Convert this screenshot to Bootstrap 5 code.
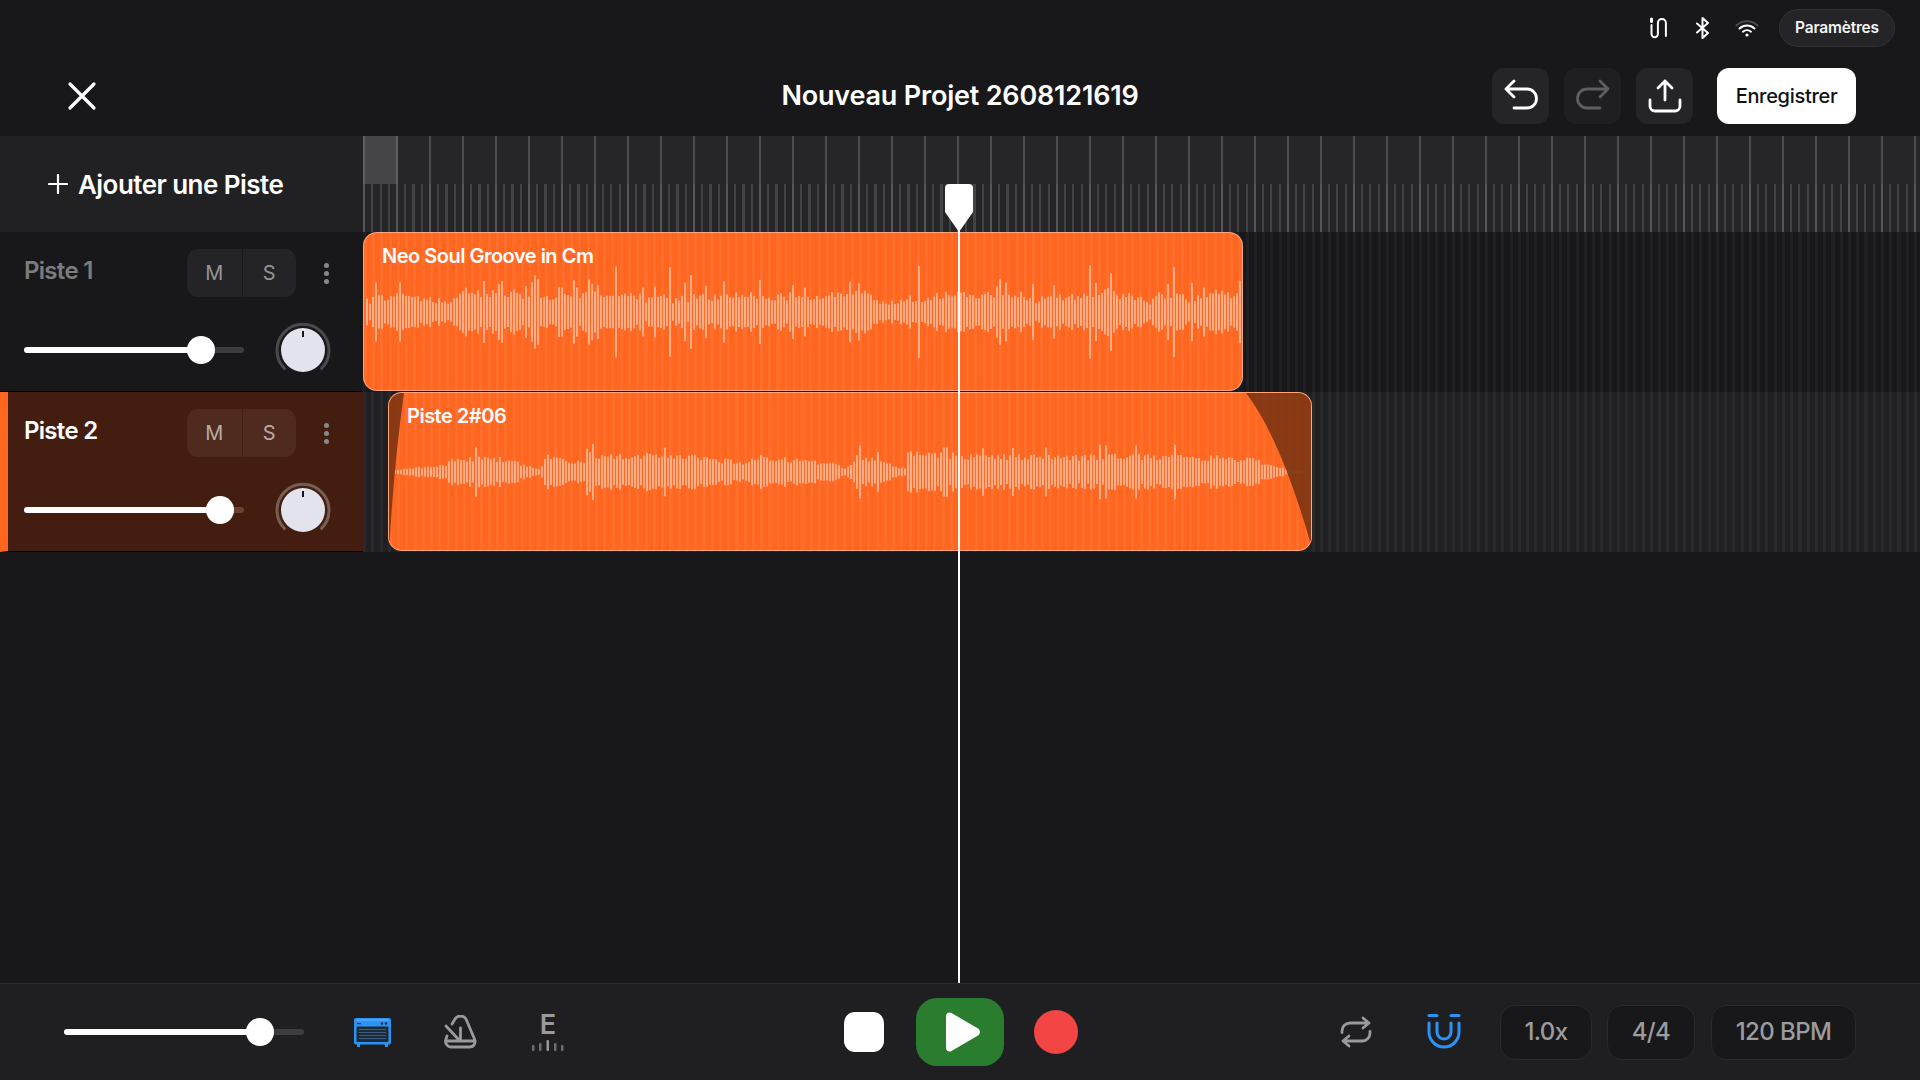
<!DOCTYPE html>
<html lang="fr">
<head>
    <meta charset="UTF-8">
    <meta name="viewport" content="width=device-width, initial-scale=1.0">
    <title>Nouveau Projet 2608121619</title>
    <link rel="stylesheet" href="https://cdn.jsdelivr.net/npm/bootstrap@5.3.0/dist/css/bootstrap.min.css">
    <style>
        html, body { height: 100%; overflow: hidden; }
        body {
            background-color: #18181a;
            color: #fff;
            font-family: Inter, "Liberation Sans", sans-serif;
        }
        .status-row { height: 56px; padding-right: 25px; }
        .status-row svg { display: block; }
        .settings-pill {
            height: 38px;
            width: 116px;
            border: 1.5px solid #333335;
            background: #252527;
            color: #f4f4f4;
            font-size: 15.5px;
            font-weight: 600;
            letter-spacing: -.2px;
            padding: 0;
        }
        .tool-row {
            height: 80px;
            display: grid;
            grid-template-columns: 1fr auto 1fr;
            align-items: center;
            padding: 0 64px;
        }
        .close-btn { margin-left: 2px; background: none; border: 0; padding: 0; line-height: 0; }
        .project-title { font-size: 27px; font-weight: 600; letter-spacing: -.2px; margin: 1px 0 0; }
        .square-btn {
            width: 57px;
            height: 56px;
            border: 0;
            border-radius: 12px;
            background: #252527;
            padding: 0;
        }
        .square-btn.dim { background: #1f1f21; }
        .save-btn {
            width: 139px;
            height: 56px;
            background: #fff;
            color: #111;
            border: 0;
            border-radius: 12px;
            font-size: 20px;
            font-weight: 500;
            letter-spacing: -.3px;
            margin-left: 24px;
        }
        .timeline { position: relative; flex: 1 1 auto; min-height: 0; }
        .left-col { width: 363px; flex: 0 0 363px; }
        .head-row { height: 96px; }
        .add-track {
            background: #212123;
            font-size: 26px;
            font-weight: 600;
            letter-spacing: -.55px;
            padding-left: 48px;
            gap: 10px;
        }
        .ruler { flex: 1 1 auto; background: #262628; position: relative; }
        .ruler-top {
            height: 48px;
            background-image: repeating-linear-gradient(90deg, #4d4d4f 0, #4d4d4f 2px, transparent 2px, transparent 33px);
        }
        .ruler-bottom {
            height: 48px;
            background-image:
                repeating-linear-gradient(90deg, #555557 0, #555557 2px, transparent 2px, transparent 33px),
                repeating-linear-gradient(90deg, #434345 0, #434345 2px, transparent 2px, transparent 8.25px);
        }
        .ruler-cell { position: absolute; left: 0; top: 0; width: 35px; height: 48px; background: #454547; border-left: 2px solid #5f5f61; border-right: 2px solid #5f5f61; }
        .track-row { height: 160px; }
        .track-head { padding: 20px 0 0 24px; position: relative; border-bottom: 1px solid #000; }
        .track-head.active { background: #431e10; border-left: 8px solid #ff6720; padding-left: 16px; }
        .track-name { font-size: 24px; font-weight: 600; letter-spacing: -.7px; color: #7c7c7e; line-height: 30px; width: 163px; margin-bottom: 7px; }
        .active .track-name { color: #fff; }
        .ms-group { width: 109px; height: 48px; margin-top: -3px; background: #242426; border-radius: 11px; overflow: hidden; }
        .ms-btn { flex: 1 1 50%; color: #949496; font-size: 20px; border: 0; background: none; padding: 0; font-weight: 400; }
        .ms-btn + .ms-btn { border-left: 1px solid #18181a; }
        .active .ms-group { background: #4f2a1e; }
        .active .ms-btn { color: #b9aaa5; }
        .active .ms-btn + .ms-btn { border-left-color: #431e10; }
        .kebab { margin-left: 21px; margin-bottom: 2px; width: 18px; gap: 3px; }
        .kebab span { width: 5px; height: 5px; border-radius: 50%; background: #88888a; display: block; }
        .slider-row { margin-top: 25px; height: 56px; }
        .track-range { width: 220px; }
        .knob { margin-left: 29px; display: block; }
        .tone-range {
            --fill: 50%;
            display: block;
            height: 28px;
            padding: 0;
            background: none;
        }
        .tone-range::-webkit-slider-runnable-track {
            height: 6px;
            border-radius: 3px;
            background: linear-gradient(90deg, #fff var(--fill), var(--rest, #3c3c3e) var(--fill));
        }
        .tone-range::-webkit-slider-thumb {
            width: 28px;
            height: 28px;
            margin-top: -11px;
            border: 0;
            border-radius: 50%;
            background: #fff;
            box-shadow: none;
        }
        .active .tone-range { --rest: #6a4336; }
        .lane {
            flex: 1 1 auto;
            position: relative;
            background-color: #18181a;
            background-image: repeating-linear-gradient(90deg, #202022 0, #202022 3px, transparent 3px, transparent 8.25px);
        }
        .lane.lit {
            background-color: #202022;
            background-image: repeating-linear-gradient(90deg, #29292b 0, #29292b 3px, transparent 3px, transparent 8.25px);
        }
        .clip {
            position: absolute;
            top: 0;
            bottom: 1px;
            background-color: #ff6720;
            background-image: repeating-linear-gradient(90deg, #ff6e2a 0, #ff6e2a 3px, transparent 3px, transparent 8.25px);
            border: 1px solid rgba(255,255,255,.4);
            border-radius: 14px;
            overflow: hidden;
        }
        .clip-one { left: 0; width: 880px; }
        .clip-two { left: 25px; width: 924px; }
        .clip-label {
            position: relative;
            z-index: 2;
            font-size: 20px;
            font-weight: 600;
            letter-spacing: -.5px;
            line-height: 24px;
            padding: 11px 0 0 18px;
        }
        .clip svg { position: absolute; left: 0; top: 0; }
        .playhead {
            position: absolute;
            left: 945px;
            top: 48px;
            bottom: 0;
            width: 28px;
            z-index: 5;
            pointer-events: none;
        }
        .playhead-line { position: absolute; left: 13px; top: 46px; bottom: 0; width: 2px; background: #fff; }
        .bottom-bar {
            height: 97px;
            flex: 0 0 97px;
            background: #1f1f21;
            border-top: 1px solid #2c2c2e;
            display: grid;
            grid-template-columns: 1fr auto 1fr;
            align-items: center;
            padding: 0 64px;
        }
        .master-range { width: 240px; }
        .stop-btn { width: 40px; height: 40px; border-radius: 11px; background: #fff; border: 0; padding: 0; margin-left: 2px; }
        .play-btn { width: 88px; height: 68px; border-radius: 21px; background: #2a7d2e; border: 0; padding: 0 0 0 5px; margin-left: 32px; }
        .rec-btn { width: 44px; height: 44px; border-radius: 50%; background: #f44545; border: 0; padding: 0; margin-left: 30px; }
        .tuner-mark { width: 32px; margin-left: 55px; color: #9a9a9c; font-size: 27px; font-weight: 600; line-height: 22px; }
        .value-pill {
            height: 55px;
            background: #18181a;
            border: 1.5px solid #2a2a2c;
            border-radius: 15px;
            color: #9c9c9e;
            font-size: 24px;
            font-weight: 500;
            letter-spacing: -.6px;
            padding: 0;
        }
    </style>
</head>
<body class="d-flex flex-column">

<div class="status-row d-flex justify-content-end align-items-center flex-shrink-0">
    <svg width="20" height="22" viewBox="0 0 20 22" fill="none" stroke="#fff" stroke-width="2" stroke-linecap="round">
        <path d="M2.500 8v9a3.200 3.200 0 0 0 6.400 0V6a4 4 0 0 1 8 0v13"/>
        <path d="M2.500 2v2.500" stroke-width="3"/>
    </svg>
    <svg width="16" height="22" viewBox="0 0 16 22" fill="none" stroke="#fff" stroke-width="2" stroke-linejoin="round" stroke-linecap="round" style="margin-left:26px">
        <path d="M2 6.500l11 9.500-5.500 5V1L13 6 2 15.500"/>
    </svg>
    <svg width="24" height="18" viewBox="0 0 24 18" fill="none" stroke-linecap="round" style="margin-left:24px">
        <path d="M1.500 6.500c6-5.600 15-5.600 21 0" stroke="#4a4a4c" stroke-width="2"/>
        <path d="M4.500 9.500c4.300-3.900 10.700-3.900 15 0" stroke="#fff" stroke-width="2"/>
        <path d="M8 12.700c2.300-1.900 5.700-1.900 8 0" stroke="#fff" stroke-width="2"/>
        <circle cx="12" cy="16" r="1.600" fill="#fff"/>
    </svg>
    <button type="button" class="btn settings-pill rounded-pill" style="margin-left:20px">Paramètres</button>
</div>

<div class="tool-row flex-shrink-0">
    <div>
        <button type="button" class="close-btn">
            <svg width="32" height="32" viewBox="0 0 32 32" fill="none" stroke="#fff" stroke-width="3.200" stroke-linecap="round"><path d="M4 4l24 24M28 4L4 28"/></svg>
        </button>
    </div>
    <h1 class="project-title">Nouveau Projet 2608121619</h1>
    <div class="d-flex justify-content-end align-items-center">
        <button type="button" class="square-btn">
            <svg width="36" height="36" viewBox="0 0 36 36" fill="none" stroke="#fff" stroke-width="2.800" stroke-linecap="round" stroke-linejoin="round"><path d="M11 3L3 11l8 8M3 11h21a8.500 8.500 0 0 1 0 19H11"/></svg>
        </button>
        <button type="button" class="square-btn dim" style="margin-left:15px">
            <svg width="36" height="36" viewBox="0 0 36 36" fill="none" stroke="#5f5f61" stroke-width="2.800" stroke-linecap="round" stroke-linejoin="round"><path d="M25 3l8 8-8 8M33 11H12a8.500 8.500 0 0 0 0 19h13"/></svg>
        </button>
        <button type="button" class="square-btn" style="margin-left:15px">
            <svg width="36" height="36" viewBox="0 0 36 36" fill="none" stroke="#fff" stroke-width="2.800" stroke-linecap="round" stroke-linejoin="round"><path d="M18 22V3M11 10l7-7 7 7M3 22v6a5 5 0 0 0 5 5h20a5 5 0 0 0 5-5v-6"/></svg>
        </button>
        <button type="button" class="save-btn">Enregistrer</button>
    </div>
</div>

<div class="timeline">
    <div class="d-flex head-row">
        <div class="left-col add-track d-flex align-items-center">
            <svg width="20" height="20" viewBox="0 0 20 20" stroke="#fff" stroke-width="2.200" stroke-linecap="round"><path d="M10 1v18M1 10h18"/></svg>
            <span>Ajouter une Piste</span>
        </div>
        <div class="ruler">
            <div class="ruler-top"></div>
            <div class="ruler-bottom"></div>
            <div class="ruler-cell"></div>
        </div>
    </div>

    <div class="d-flex track-row">
        <div class="left-col track-head">
            <div class="d-flex align-items-center">
                <div class="track-name">Piste 1</div>
                <div class="ms-group d-flex"><button type="button" class="ms-btn">M</button><button type="button" class="ms-btn">S</button></div>
                <div class="kebab d-flex flex-column align-items-center"><span></span><span></span><span></span></div>
            </div>
            <div class="slider-row d-flex align-items-center">
                <input type="range" class="form-range tone-range track-range" min="0" max="100" value="85" style="--fill:80.4%">
                <svg class="knob" width="60" height="60" viewBox="0 0 60 60"><path d="M12.300 49.300A26 26 0 1 1 47.700 49.300" fill="none" stroke="#4a4a4c" stroke-width="3"/><circle cx="30" cy="30" r="22" fill="#e2e3ec"/><rect x="29" y="11" width="2" height="6" fill="#18181a"/></svg>
            </div>
        </div>
        <div class="lane">
            <div class="clip clip-one">
                <svg id="waveOne" width="880" height="159"></svg>
                <div class="clip-label">Neo Soul Groove in Cm</div>
            </div>
        </div>
    </div>

    <div class="d-flex track-row">
        <div class="left-col track-head active">
            <div class="d-flex align-items-center">
                <div class="track-name">Piste 2</div>
                <div class="ms-group d-flex"><button type="button" class="ms-btn">M</button><button type="button" class="ms-btn">S</button></div>
                <div class="kebab d-flex flex-column align-items-center"><span></span><span></span><span></span></div>
            </div>
            <div class="slider-row d-flex align-items-center">
                <input type="range" class="form-range tone-range track-range" min="0" max="100" value="95" style="--fill:89%">
                <svg class="knob" width="60" height="60" viewBox="0 0 60 60"><path d="M12.300 49.300A26 26 0 1 1 47.700 49.300" fill="none" stroke="#775d54" stroke-width="3"/><circle cx="30" cy="30" r="22" fill="#e2e3ec"/><rect x="29" y="11" width="2" height="6" fill="#18181a"/></svg>
            </div>
        </div>
        <div class="lane lit">
            <div class="clip clip-two">
                <svg id="waveTwo" width="924" height="159"></svg>
                <div class="clip-label">Piste 2#06</div>
            </div>
        </div>
    </div>

    <div class="playhead">
        <svg class="d-block" width="28" height="48" viewBox="0 0 28 48"><path d="M4 0h20a4 4 0 0 1 4 4v24L14 48 0 28V4a4 4 0 0 1 4-4z" fill="#fff"/></svg>
        <div class="playhead-line"></div>
    </div>
</div>

<div class="bottom-bar">
    <div class="d-flex align-items-center">
        <input type="range" class="form-range tone-range master-range" min="0" max="100" value="86" style="--fill:82%">
        <svg width="37" height="29" viewBox="0 0 37 29" style="margin-left:50px">
            <rect x="0" y="0" width="37" height="26.500" rx="2" fill="#2b93f5"/>
            <rect x="2.500" y="1.500" width="32" height="1" fill="#6fb6f8"/>
            <rect x="2.500" y="8.500" width="32" height="15.500" rx="1" fill="#1d2a3a"/>
            <g fill="#3d5d80"><rect x="5" y="11" width="27" height="1"/><rect x="5" y="14" width="27" height="1"/><rect x="5" y="17" width="27" height="1"/><rect x="5" y="20" width="27" height="1"/></g>
            <rect x="3" y="26" width="3" height="3" fill="#2b93f5"/><rect x="31" y="26" width="3" height="3" fill="#2b93f5"/>
            <circle cx="28" cy="5.500" r="1.300" fill="#1d2a3a"/><circle cx="32" cy="5.500" r="1.300" fill="#1d2a3a"/>
            <rect x="3" y="5" width="4" height="1.200" fill="#1d2a3a"/>
        </svg>
        <svg width="33" height="34" viewBox="0 0 33 34" fill="none" stroke="#9a9a9c" stroke-width="2.800" stroke-linecap="round" stroke-linejoin="round" style="margin-left:53px">
            <path d="M8 9l3-5c2.500-4 8.500-4 11 0l8.500 20c1.500 4-.500 8-5 8H7.500c-4.500 0-7-4-5.500-8l1-3"/>
            <path d="M2 26h29M2 11l14 15M16.500 13v13"/>
        </svg>
        <div class="tuner-mark d-flex flex-column align-items-center">
            <span>E</span>
            <svg class="mt-1" width="32" height="11" viewBox="0 0 32 11" fill="#6f6f71"><rect x="0" y="5" width="2.500" height="6" rx="1"/><rect x="7" y="3" width="2.500" height="8" rx="1"/><rect x="14.500" y="0" width="2.500" height="11" rx="1" fill="#9a9a9c"/><rect x="22" y="3" width="2.500" height="8" rx="1"/><rect x="29" y="5" width="2.500" height="6" rx="1"/></svg>
        </div>
    </div>
    <div class="d-flex align-items-center">
        <button type="button" class="stop-btn"></button>
        <button type="button" class="play-btn d-flex align-items-center justify-content-center">
            <svg width="35" height="40" viewBox="0 0 35 40"><path d="M1 4c0-3 3-4.500 5.500-3L33 16.500c2.500 1.500 2.500 5.500 0 7L6.500 39c-2.500 1.500-5.500 0-5.500-3z" fill="#fff"/></svg>
        </button>
        <button type="button" class="rec-btn"></button>
    </div>
    <div class="d-flex justify-content-end align-items-center">
        <svg width="32" height="32" viewBox="0 0 32 32" fill="none" stroke="#9a9a9c" stroke-width="2.800" stroke-linecap="round" stroke-linejoin="round">
            <path d="M23 2l6 5-6 5M29 7H10a8 8 0 0 0-8 8v1.500"/>
            <path d="M9 30l-6-5 6-5M3 25h19a8 8 0 0 0 8-8v-1.500"/>
        </svg>
        <svg width="36" height="38" viewBox="0 0 36 38" fill="none" stroke="#2b93f5" stroke-width="3" stroke-linecap="round" style="margin-left:54px">
            <path d="M3 2.500h8M25 2.500h8"/>
            <path d="M3 10v9a15 15 0 0 0 30 0v-9M11 10v9a7 7 0 0 0 14 0v-9"/>
        </svg>
        <button type="button" class="btn value-pill" style="width:92px;margin-left:38px">1.0x</button>
        <button type="button" class="btn value-pill" style="width:88px;margin-left:15px">4/4</button>
        <button type="button" class="btn value-pill" style="width:145px;margin-left:16px">120 BPM</button>
    </div>
</div>

<script>
    // small seeded random so the waveforms come out the same every time
    function seeded(s) {
        return function () {
            s = (s * 1664525 + 1013904223) % 4294967296;
            return s / 4294967296;
        };
    }

    function drawBars(svg, bars, mid) {
        let out = "";
        bars.forEach(b => {
            out += `<rect x="${b.x}" y="${mid - b.h}" width="2" height="${b.h * 2}" fill="#fff" fill-opacity=".45"/>`;
        });
        svg.insertAdjacentHTML("afterbegin", out);
    }

    // first clip: busy loop with frequent medium hits and a few high peaks
    let rnd = seeded(4711);
    let barsOne = [];
    let swell = 15;
    for (let x = 2; x < 878; x += 3) {
        swell += (rnd() - .5) * 6;
        swell += (16 - swell) * .15;
        let h = swell + (rnd() - .5) * 7;
        let r = rnd();
        if (r > .96) h = 36 + rnd() * 11;
        else if (r > .86) h = 24 + rnd() * 9;
        barsOne.push({ x: x, h: Math.max(6, h) });
    }
    drawBars(document.getElementById("waveOne"), barsOne, 79);

    // second clip: height follows the phrases of the take, then the long fade
    const shape = [[0,1],[6,2],[28,5],[58,7],[60,15],[115,14],[150,3],[156,17],[194,11],[198,19],[300,17],[358,9],[361,17],[445,9],[456,3],[468,18],[516,3],[520,19],[640,16],[780,17],[860,14],[900,2],[924,1]];
    function shapeAt(x) {
        for (let i = 1; i < shape.length; i++) {
            if (x <= shape[i][0]) {
                let a = shape[i - 1], b = shape[i];
                return a[1] + (b[1] - a[1]) * (x - a[0]) / (b[0] - a[0]);
            }
        }
        return 1;
    }
    rnd = seeded(90210);
    let barsTwo = [];
    for (let x = 5; x < 918; x += 3) {
        let env = shapeAt(x);
        let h = env * (.68 + rnd() * .42);
        if (x < 860 && env > 9 && rnd() > .9) h = env + 6 + rnd() * 5;
        barsTwo.push({ x: x, h: h });
    }
    let waveTwo = document.getElementById("waveTwo");
    drawBars(waveTwo, barsTwo, 79);
    waveTwo.insertAdjacentHTML("beforeend",
        '<path d="M0 0H15Q5 70 0 159Z" fill="#7f3613" fill-opacity=".92"/>' +
        '<path d="M857 0Q893 47 924 159V0Z" fill="#7f3613" fill-opacity=".92"/>');
</script>
<script src="https://cdn.jsdelivr.net/npm/bootstrap@5.3.0/dist/js/bootstrap.bundle.min.js"></script>
</body>
</html>
